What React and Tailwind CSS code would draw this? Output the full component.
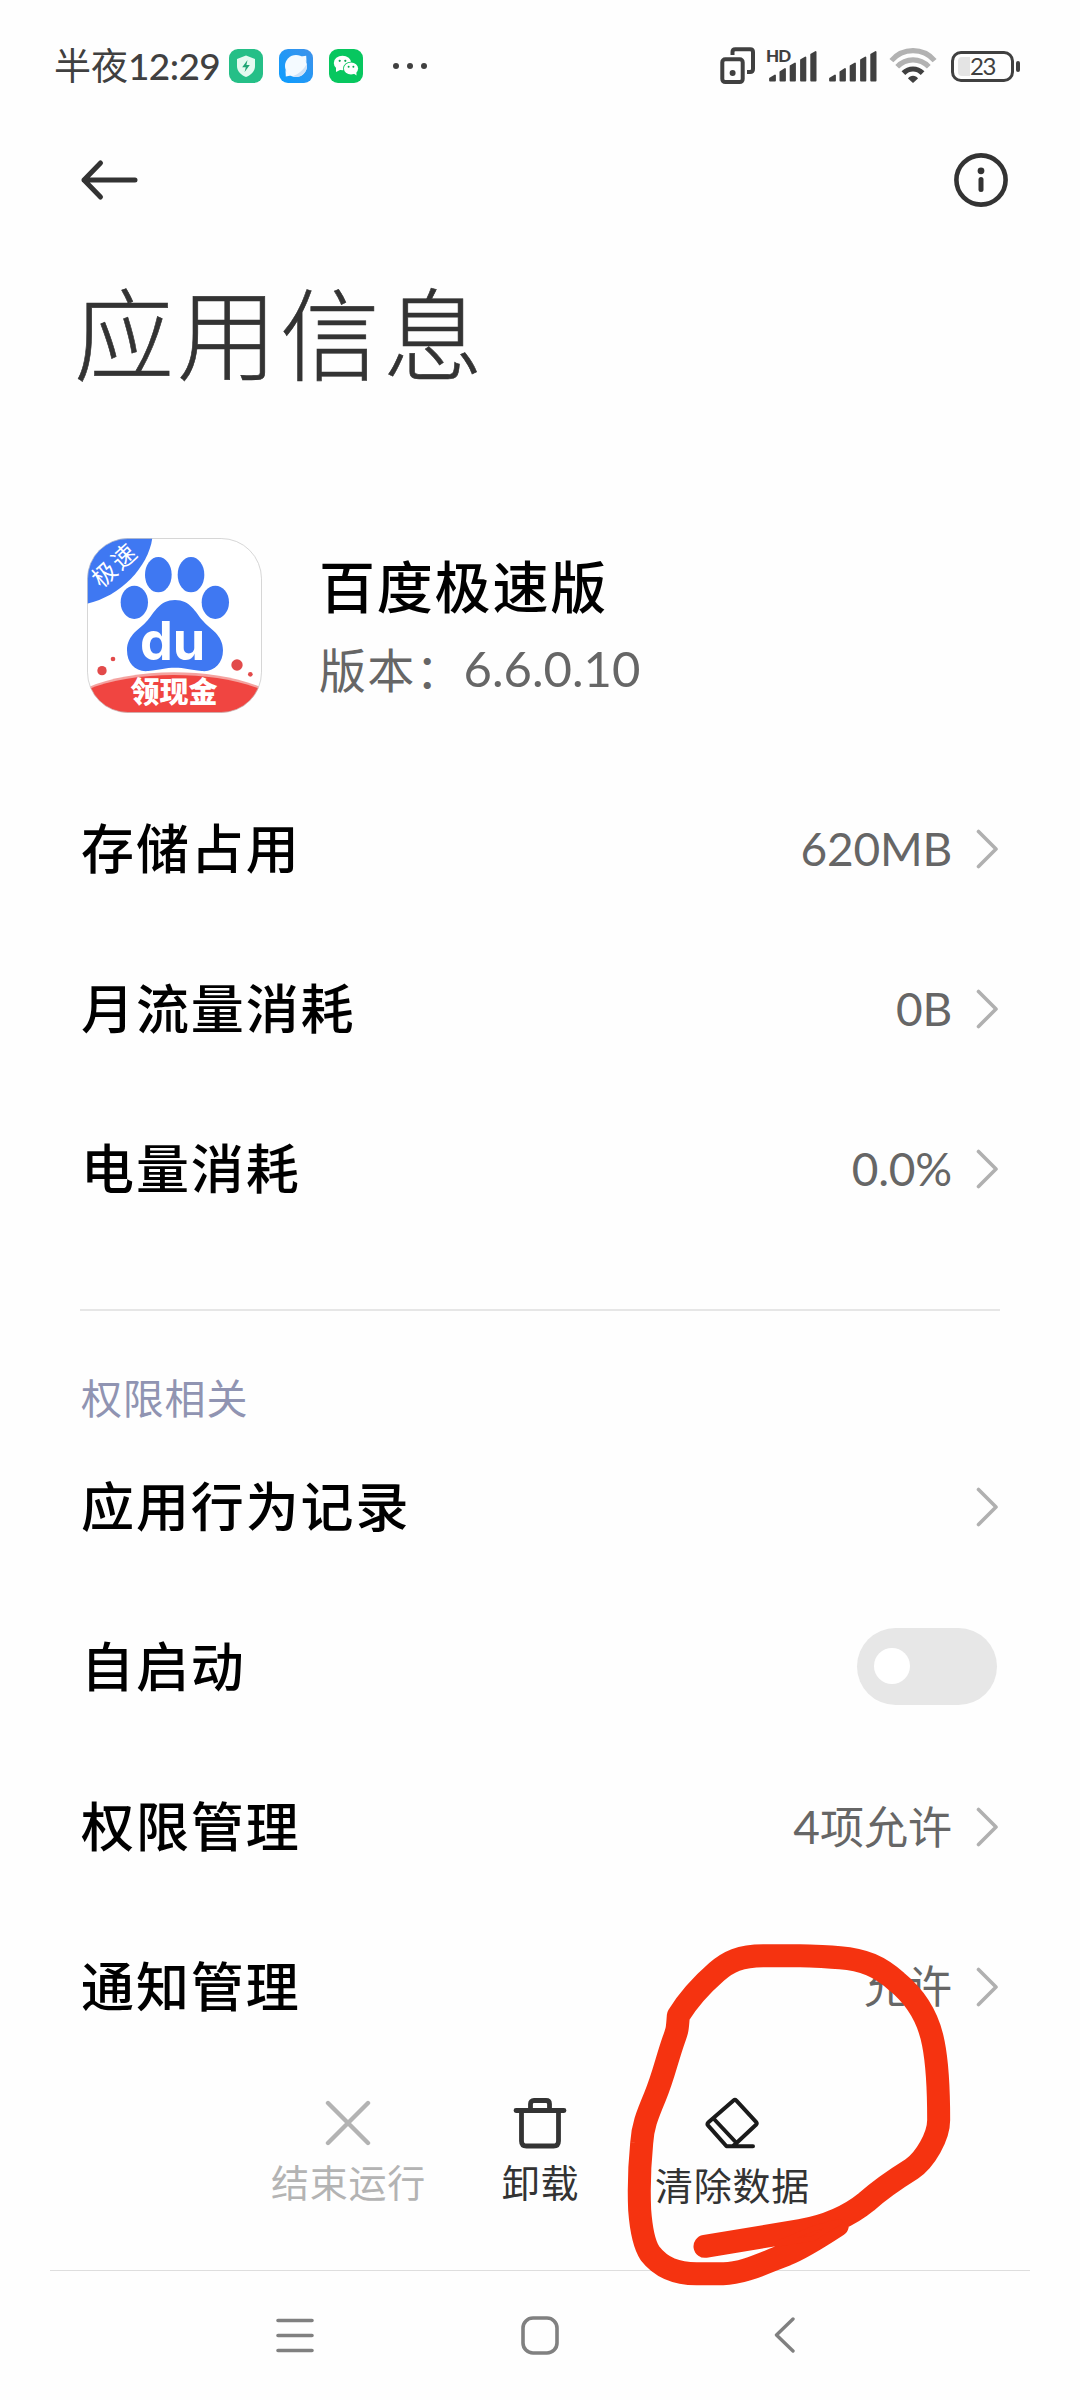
import React, { useState } from "react";

const usageRows = [
  { label: "存储占用", value: "620MB" },
  { label: "月流量消耗", value: "0B" },
  { label: "电量消耗", value: "0.0%" },
];

function ShieldIcon() {
  return (
    <svg width="34" height="34" viewBox="0 0 34 34">
      <rect width="34" height="34" rx="9" fill="#25bf87" />
      <path d="M17 6.5 L26 10 V17 C26 22.5 22 26 17 28 C12 26 8 22.5 8 17 V10 Z" fill="#e4faf0" />
      <path d="M18.5 11 L13.2 18.2 H16.8 L15.6 23 L20.8 16 H17.4 Z" fill="#1fa574" />
    </svg>
  );
}

function BrowserIcon() {
  return (
    <svg width="34" height="34" viewBox="0 0 34 34">
      <defs>
        <linearGradient id="browserBg" x1="0" y1="1" x2="1" y2="0">
          <stop offset="0" stopColor="#0a9dff" />
          <stop offset="1" stopColor="#3f92ea" />
        </linearGradient>
      </defs>
      <rect width="34" height="34" rx="9" fill="url(#browserBg)" />
      <circle cx="17" cy="17" r="11" fill="#f4faff" />
      <path d="M27.8 14.5 C25 20.5 20 25 13.5 27.3 C21 30 29.5 23.5 27.8 14.5 Z" fill="#cfe2f7" />
      <path d="M6.5 21 L6.8 27.5 L12 26.5 Z" fill="#f4faff" />
      <path d="M27.5 13 L27.2 6.8 L22 7.6 Z" fill="#f4faff" />
    </svg>
  );
}

function WechatIcon() {
  return (
    <svg width="34" height="34" viewBox="0 0 34 34">
      <rect width="34" height="34" rx="9" fill="#07c75f" />
      <ellipse cx="13.5" cy="14" rx="8.7" ry="7.3" fill="#fff" />
      <path d="M7 18 L7 23 L12 20.5 Z" fill="#fff" />
      <ellipse cx="22" cy="19.6" rx="8" ry="6.9" fill="#07c75f" />
      <ellipse cx="22" cy="19.6" rx="7.1" ry="6" fill="#fff" />
      <path d="M24 24 L27.5 26.6 L27.3 22.5 Z" fill="#fff" />
      <circle cx="10.7" cy="11.8" r="1.1" fill="#07a750" />
      <circle cx="16.3" cy="11.8" r="1.1" fill="#07a750" />
      <circle cx="19.6" cy="17.8" r="1" fill="#07a750" />
      <circle cx="24.4" cy="17.8" r="1" fill="#07a750" />
    </svg>
  );
}

function DualSimIcon() {
  return (
    <svg width="36" height="38" viewBox="0 0 36 38" fill="none" stroke="#404040" strokeWidth="4">
      <rect x="2.3" y="12.3" width="20.4" height="22.8" rx="3" />
      <path d="M12.5 8 V5 Q12.5 2.3 15.2 2.3 H30.2 Q33 2.3 33 5 V22 Q33 25 30 25 H27" />
      <circle cx="12.6" cy="26" r="3" fill="#404040" stroke="none" />
    </svg>
  );
}

// Five rising bars with slanted tops
function SignalIcon() {
  return (
    <svg width="48" height="31" viewBox="0 0 48 31" fill="#404040" stroke="#404040" strokeWidth="1.8" strokeLinejoin="round">
      <path d="M1 29.5 V27.5 L6 24.5 V29.5 Z" />
      <path d="M11.4 29.5 V21 L16 18 V29.5 Z" />
      <path d="M21.6 29.5 V15 L26 12.5 V29.5 Z" />
      <path d="M32 29.5 V9 L36.4 6.5 V29.5 Z" />
      <path d="M42.2 29.5 V3.6 L46.6 1 V29.5 Z" />
    </svg>
  );
}

function WifiIcon() {
  return (
    <svg width="48" height="36" viewBox="0 0 48 36" fill="none" strokeWidth="5.2">
      <path d="M2.4 12.6 C14 -0.6 34 -0.6 45.6 12.6" stroke="#b2b2b2" />
      <path d="M8.2 18.8 C17 9.6 31 9.6 39.8 18.8" stroke="#b2b2b2" />
      <path d="M14.4 25.2 C20 19.6 28 19.6 33.6 25.2" stroke="#404040" />
      <path d="M24 35 L19 30.4 C21 27 27 27 29 30.4 Z" fill="#404040" stroke="none" />
    </svg>
  );
}

function BatteryIcon() {
  return (
    <div className="flex items-center">
      <div className="flex h-[31px] w-[63px] items-center rounded-[10px] border-[3px] border-[#404040] pl-1">
        <div className="h-[19px] w-[12px] rounded-l-[4px] bg-[#e4e4e4]" />
        <span className="font-['Lato'] text-[24px] leading-none tracking-[-1.5px] text-[#404040]">23</span>
      </div>
      <div className="ml-[2px] h-[11px] w-[4px] rounded-[2px] bg-[#404040]" />
    </div>
  );
}

function StatusBar() {
  return (
    <header className="flex h-[132px] items-center justify-between pl-[54px] pr-[60px] text-[#404040]">
      <div className="flex items-center">
        <span className="w-[175px] whitespace-nowrap pb-[2px] text-[37px] leading-none">
          半夜<span className="font-['Lato'] text-[37px] font-medium tracking-[-0.6px]">12:29</span>
        </span>
        <div className="flex gap-4">
          <ShieldIcon />
          <BrowserIcon />
          <WechatIcon />
        </div>
        <div className="ml-[30px] flex gap-2">
          <i className="size-[6px] rounded-full bg-[#404040]" />
          <i className="size-[6px] rounded-full bg-[#404040]" />
          <i className="size-[6px] rounded-full bg-[#404040]" />
        </div>
      </div>
      <div className="flex items-center">
        <DualSimIcon />
        <div className="relative ml-[13px]">
          <span className="absolute -left-[3px] -top-[4px] font-['Lato'] text-[17px] font-black leading-none tracking-[-0.8px]">HD</span>
          <SignalIcon />
        </div>
        <div className="ml-3">
          <SignalIcon />
        </div>
        <div className="ml-[12px] mr-[14px]">
          <WifiIcon />
        </div>
        <BatteryIcon />
      </div>
    </header>
  );
}

function AppIcon() {
  return (
    <svg className="overflow-visible" width="175" height="175" viewBox="20 25 525 525">
      <defs>
        <clipPath id="appIconShape">
          <rect x="21" y="26" width="523" height="523" rx="122" />
        </clipPath>
      </defs>
      <g clipPath="url(#appIconShape)">
        <rect x="20" y="25" width="525" height="525" fill="#fff" />
        <path d="M20 25 H216 C204 112 120 200 20 222 Z" fill="#3f78f2" />
        <g fill="#3f78f2">
          <ellipse cx="234" cy="135" rx="40" ry="53" />
          <ellipse cx="332" cy="135" rx="40" ry="53" />
          <ellipse cx="162" cy="218" rx="41" ry="50" />
          <ellipse cx="405" cy="218" rx="41" ry="50" />
          <path d="M284 211 C330 211 346 248 366 272 C388 298 428 315 428 362 C428 402 400 428 364 424 C330 420 312 414 284 414 C256 414 238 420 204 424 C166 428 140 402 140 362 C140 315 180 298 202 272 C222 248 238 211 284 211 Z" />
        </g>
        <path d="M20 474 C160 412 400 412 545 474 V485 H20 Z" fill="#f4a3a0" />
        <path d="M20 480 C160 421 400 421 545 480 V550 H20 Z" fill="#f04541" />
        <g fill="#e24a4a">
          <circle cx="65" cy="423" r="14" />
          <circle cx="98" cy="388" r="7" />
          <circle cx="470" cy="406" r="17" />
          <circle cx="510" cy="434" r="7" />
        </g>
      </g>
      <text x="277" y="392" textAnchor="middle" textLength="196" lengthAdjust="spacingAndGlyphs" fontFamily="Inter, sans-serif" fontWeight="700" fontSize="160" fill="#fff">du</text>
      <text x="281" y="521" textAnchor="middle" fontFamily="Noto Sans CJK SC, sans-serif" fontWeight="900" fontSize="87" fill="#fff">领现金</text>
      <text transform="translate(105 107) rotate(-42)" y="24" textAnchor="middle" fontFamily="Noto Sans CJK SC, sans-serif" fontSize="72" fill="#fff" letterSpacing="6">极速</text>
      <rect x="21.5" y="26.5" width="522" height="522" rx="121" fill="none" stroke="#c4c4c4" strokeWidth="3" strokeOpacity="0.7" />
    </svg>
  );
}

function Chevron() {
  return (
    <svg width="23" height="40" viewBox="0 0 23 40" fill="none" stroke="#b0b0b0" strokeWidth="3.6" strokeLinecap="round" strokeLinejoin="round">
      <path d="M2.5 2.5 L20 20 L2.5 37.5" />
    </svg>
  );
}

function Row({ label, children }) {
  return (
    <div className="flex h-40 items-center justify-between">
      <span className="pb-[6px] pl-px text-[53px] font-medium leading-none tracking-[1.9px] text-black">{label}</span>
      <div className="flex items-center gap-6 pr-px text-[#666]">{children}</div>
    </div>
  );
}

function Toggle({ checked, onChange }) {
  return (
    <button
      type="button"
      role="switch"
      aria-checked={checked}
      onClick={() => onChange(!checked)}
      className={`mb-[2px] mr-[2px] flex h-[77px] w-[140px] items-center rounded-full px-[17px] ${
        checked ? "justify-end bg-blue-500" : "bg-[#e7e7e7]"
      }`}
    >
      <span className="size-9 rounded-full bg-white" />
    </button>
  );
}

function Action({ label, className, children }) {
  return (
    <button type="button" className={`flex w-48 flex-col items-center ${className}`}>
      <span className="flex h-[54px] items-center">{children}</span>
      <span className="whitespace-nowrap pl-px text-[38px] leading-none tracking-[0.8px]">{label}</span>
    </button>
  );
}

// Freehand marker ring around the clear-data action
function MarkerRing() {
  return (
    <svg className="pointer-events-none absolute left-[600px] top-[1920px]" width="400" height="400" viewBox="0 0 1200 1200" fill="none" stroke="#f53310" strokeWidth="69" strokeLinecap="round" strokeLinejoin="round">
      <path d="M315 979 L600 932 C680 918 745 890 800 845 C850 800 890 775 935 747 C975 720 1016 650 1016 600 C1016 520 1014 440 1000 370 C985 290 945 230 890 185 C840 140 790 118 720 113 C660 110 640 107 600 107 H490 C420 107 385 125 350 155 C310 190 270 230 235 287 C232 330 232 330 221 360 C200 420 190 470 165 530 C140 590 128 620 125 670 C118 740 116 800 119 870 C122 910 130 970 150 1000 C185 1045 230 1061 290 1061 H370 C430 1061 500 1025 560 1003 C610 983 660 950 712 916" />
      <path d="M530 972 L640 925 L720 905 L640 955 Z" fill="#f53310" strokeWidth="16" />
    </svg>
  );
}

export default function App() {
  const [autoStart, setAutoStart] = useState(false);

  return (
    <div className="relative flex h-[2400px] w-[1080px] flex-col overflow-hidden bg-[#fefefe] font-['Noto_Sans_CJK_SC',sans-serif]">
      <StatusBar />

      <div className="flex h-24 items-center justify-between pl-20 pr-[71px]">
        <svg width="60" height="42" viewBox="0 0 60 42" fill="none" stroke="#333" strokeWidth="5" strokeLinecap="round" strokeLinejoin="round">
          <path d="M20.5 4 L4 21 L20.5 38 M4 21 H55" />
        </svg>
        <svg width="56" height="56" viewBox="0 0 56 56" fill="none" stroke="#333" strokeWidth="4.6">
          <circle cx="28" cy="28" r="24.6" />
          <circle cx="28" cy="18.8" r="3.4" fill="#333" stroke="none" />
          <path d="M28 27.5 V37.5" strokeWidth="5" strokeLinecap="round" />
        </svg>
      </div>

      <h1 className="mt-[46px] pl-[74px] text-[100px] font-light leading-[112px] tracking-[3px] text-[#333] [-webkit-text-stroke:0.6px_#333]">应用信息</h1>

      <section className="mt-[152px] flex items-center pl-[87px]">
        <AppIcon />
        <div className="ml-[57px]">
          <h2 className="text-[56px] font-medium leading-[70px] tracking-[1.8px] text-black">百度极速版</h2>
          <p className="mt-[14px] flex whitespace-pre text-[47px] leading-[70px] tracking-[1.2px] text-[#666]">
            版本：<span className="font-['Lato'] text-[49px] tracking-[0px]">6.6.0.10</span>
          </p>
        </div>
      </section>

      <main className="mt-[56px] px-20">
        {usageRows.map((row) => (
          <Row key={row.label} label={row.label}>
            <span className="font-['Lato'] text-[46px] leading-none tracking-[-0.2px]">{row.value}</span>
            <Chevron />
          </Row>
        ))}

        <div className="mt-[60px] h-[2px] bg-[#e6e6e6]" />
        <div className="mt-[60px] flex h-[56px] items-center pb-[6px] pl-px text-[41px] leading-none tracking-[0.8px] text-[#9094b2]">权限相关</div>

        <Row label="应用行为记录">
          <Chevron />
        </Row>
        <Row label="自启动">
          <Toggle checked={autoStart} onChange={setAutoStart} />
        </Row>
        <Row label="权限管理">
          <span className="pb-[2px] text-[44px] leading-none">
            <span className="font-['Lato'] text-[46px]">4</span>项允许
          </span>
          <Chevron />
        </Row>
        <Row label="通知管理">
          <span className="pb-[6px] text-[44px] leading-none">允许</span>
          <Chevron />
        </Row>
      </main>

      <div className="mt-[29px] flex justify-center">
        <Action label="结束运行" className="gap-3 text-[#b3b3b3]">
          <svg width="46" height="46" viewBox="0 0 46 46" fill="none" stroke="currentColor" strokeWidth="4.4" strokeLinecap="round">
            <path d="M3 3 L43 43 M43 3 L3 43" />
          </svg>
        </Action>
        <Action label="卸载" className="gap-3 text-[#333]">
          <svg width="54" height="52" viewBox="0 0 54 52" fill="none" stroke="currentColor" strokeWidth="4.8" strokeLinecap="round" strokeLinejoin="round">
            <path d="M3 13.5 H51 M17.5 13 V7 Q17.5 3.5 21 3.5 H33 Q36.5 3.5 36.5 7 V13" />
            <path d="M8.5 14 V44 Q8.5 49 13.5 49 H40.5 Q45.5 49 45.5 44 V14" />
          </svg>
        </Action>
        <Action label="清除数据" className="gap-[15px] text-[#333]">
          <svg width="54" height="52" viewBox="0 0 54 52" fill="none" stroke="#1a1a1a" strokeWidth="4" strokeLinecap="round" strokeLinejoin="round">
            <path d="M31.5 46 L51 27.8 Q52.4 26.3 51 24.8 L31.4 3.6 Q30 2.2 28.5 3.5 L3.2 25.6 Q1.8 27.2 3.2 28.6 L21.5 49.3 H48 M9 22 L31.5 46 L28 49" />
          </svg>
        </Action>
      </div>

      <nav className="absolute inset-x-[50px] bottom-0 flex h-[130px] items-center justify-between border-t border-[#dedede] pl-[225px] pr-[226px] text-[#808080]">
        <svg width="40" height="38" viewBox="0 0 40 38" stroke="currentColor" strokeWidth="3.6" strokeLinecap="round">
          <path d="M3 3.5 H37 M3 18.5 H37 M3 33.5 H37" />
        </svg>
        <svg width="40" height="40" viewBox="0 0 40 40" fill="none" stroke="currentColor" strokeWidth="3.6">
          <rect x="3" y="2" width="34" height="35" rx="10" />
        </svg>
        <svg width="40" height="38" viewBox="0 0 40 38" fill="none" stroke="currentColor" strokeWidth="3.4" strokeLinecap="round" strokeLinejoin="round">
          <path d="M29 2 L12.5 18 L29 34" />
        </svg>
      </nav>

      <MarkerRing />
    </div>
  );
}
